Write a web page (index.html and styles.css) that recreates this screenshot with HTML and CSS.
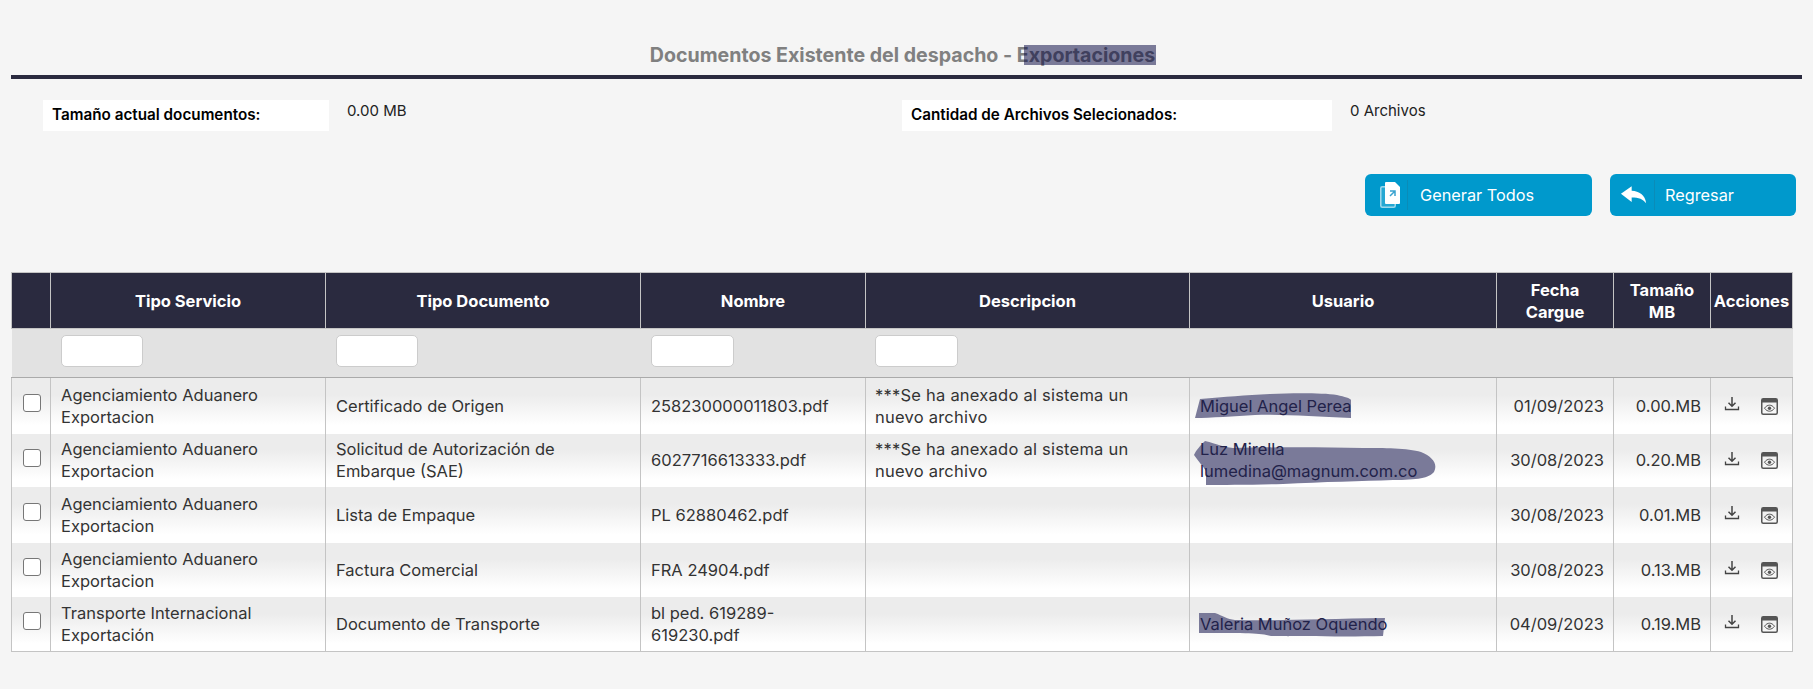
FILE: index.html
```html
<!DOCTYPE html>
<html lang="es">
<head>
<meta charset="utf-8">
<title>Documentos Existente del despacho</title>
<link rel="stylesheet" href="styles.css">
</head>
<body>
<main class="page">
  <h1 class="title">Documentos Existente del despacho - <span class="mark">Exportaciones</span></h1>
  <section class="stats">
    <div class="stat stat-a"><span class="stat-label">Tamaño actual documentos:</span><span class="stat-value">0.00 MB</span></div>
    <div class="stat stat-b"><span class="stat-label">Cantidad de Archivos Selecionados:</span><span class="stat-value">0 Archivos</span></div>
  </section>
  <section class="actions">
    <button class="btn btn-gen" type="button">
      <span class="btn-icon"><svg width="20" height="26" viewBox="0 0 20 26"><rect x=".75" y="4.750" width="14.500" height="20.500" rx="1.500" fill="#fff" fill-opacity=".15" stroke="#fff" stroke-opacity=".6" stroke-width="1.500"/><path d="M5 1a1 1 0 0 1 1-1h9l5 5v16a1 1 0 0 1-1 1H6a1 1 0 0 1-1-1z" fill="#fff"/><path d="M10 9h5v5M14.500 9.500 10 14" fill="none" stroke="#3aa3cf" stroke-width="1.500"/></svg></span>
      <span class="btn-text">Generar Todos</span>
    </button>
    <button class="btn btn-back" type="button">
      <span class="btn-icon"><svg width="28" height="20" viewBox="0 0 30 24" preserveAspectRatio="none"><path d="M1 10.500 12.500 1.500v5.500c8 .5 14.500 5 15.500 15-3-5-8-7-15.500-7v5.500z" fill="#fff"/></svg></span>
      <span class="btn-text">Regresar</span>
    </button>
  </section>
  <table class="grid">
    <colgroup>
      <col class="c-check"><col class="c-serv"><col class="c-tipo"><col class="c-nom"><col class="c-desc"><col class="c-user"><col class="c-fecha"><col class="c-size"><col class="c-act">
    </colgroup>
    <thead>
      <tr class="head">
        <th></th><th>Tipo Servicio</th><th>Tipo Documento</th><th>Nombre</th><th>Descripcion</th><th>Usuario</th><th>Fecha<br>Cargue</th><th>Tamaño<br>MB</th><th>Acciones</th>
      </tr>
      <tr class="filters">
        <td></td>
        <td><input class="filter" type="text" aria-label="Tipo Servicio"></td>
        <td><input class="filter" type="text" aria-label="Tipo Documento"></td>
        <td><input class="filter filter-wide" type="text" aria-label="Nombre"></td>
        <td class="desc-filter"><input class="filter filter-wide" type="text" aria-label="Descripcion"></td>
        <td></td><td></td><td></td><td></td>
      </tr>
    </thead>
    <tbody>
      <tr class="row r1">
        <td class="chk"><input class="box" type="checkbox" aria-label="Seleccionar"></td>
        <td>Agenciamiento Aduanero Exportacion</td>
        <td>Certificado de Origen</td>
        <td>258230000011803.pdf</td>
        <td class="desc">***Se ha anexado al sistema un nuevo archivo</td>
        <td class="user">
          <svg class="scribble s1" width="160" height="28" viewBox="0 0 160 28"><path d="M5 7C30 5 50 3 75 2 100 1 128 1 142 3 150 5 155 6 156 8L156 26C120 25 90 22 60 23 40 24 15 26 0 26z"/></svg>
          <span class="utext">Miguel Angel Perea</span>
        </td>
        <td class="num">01/09/2023</td>
        <td class="num">0.00.MB</td>
        <td class="acts"><svg class="i-dl" width="16" height="16" viewBox="0 0 16 16"><use href="#dl"/></svg><svg class="i-view" width="17" height="17" viewBox="0 0 17 17"><use href="#view"/></svg></td>
      </tr>
      <tr class="row r2">
        <td class="chk"><input class="box" type="checkbox" aria-label="Seleccionar"></td>
        <td>Agenciamiento Aduanero Exportacion</td>
        <td>Solicitud de Autorización de Embarque (SAE)</td>
        <td>6027716613333.pdf</td>
        <td class="desc">***Se ha anexado al sistema un nuevo archivo</td>
        <td class="user">
          <svg class="scribble s2" width="246" height="46" viewBox="0 0 246 46"><path d="M12 1C24 4 30 7 40 8 80 7 130 7 170 8 190 8 215 8 228 12 240 17 245 24 241 32 236 38 225 40 200 40 170 41 130 42 90 44 60 45 30 45 13 45L13 31C10 26 5 21 1 15 3 10 8 5 12 1z"/></svg>
          <span class="utext">Luz Mirella<br>lumedina@magnum.com.co</span>
        </td>
        <td class="num">30/08/2023</td>
        <td class="num">0.20.MB</td>
        <td class="acts"><svg class="i-dl" width="16" height="16" viewBox="0 0 16 16"><use href="#dl"/></svg><svg class="i-view" width="17" height="17" viewBox="0 0 17 17"><use href="#view"/></svg></td>
      </tr>
      <tr class="row r3">
        <td class="chk"><input class="box" type="checkbox" aria-label="Seleccionar"></td>
        <td>Agenciamiento Aduanero Exportacion</td>
        <td>Lista de Empaque</td>
        <td>PL 62880462.pdf</td>
        <td></td><td></td>
        <td class="num">30/08/2023</td>
        <td class="num">0.01.MB</td>
        <td class="acts"><svg class="i-dl" width="16" height="16" viewBox="0 0 16 16"><use href="#dl"/></svg><svg class="i-view" width="17" height="17" viewBox="0 0 17 17"><use href="#view"/></svg></td>
      </tr>
      <tr class="row r4">
        <td class="chk"><input class="box" type="checkbox" aria-label="Seleccionar"></td>
        <td>Agenciamiento Aduanero Exportacion</td>
        <td>Factura Comercial</td>
        <td>FRA 24904.pdf</td>
        <td></td><td></td>
        <td class="num">30/08/2023</td>
        <td class="num">0.13.MB</td>
        <td class="acts"><svg class="i-dl" width="16" height="16" viewBox="0 0 16 16"><use href="#dl"/></svg><svg class="i-view" width="17" height="17" viewBox="0 0 17 17"><use href="#view"/></svg></td>
      </tr>
      <tr class="row r5">
        <td class="chk"><input class="box" type="checkbox" aria-label="Seleccionar"></td>
        <td>Transporte Internacional Exportación</td>
        <td>Documento de Transporte</td>
        <td>bl ped. 619289-619230.pdf</td>
        <td></td>
        <td class="user">
          <svg class="scribble s3" width="190" height="26" viewBox="0 0 190 26"><path d="M0 0H16C24 3 28 6 36 7 70 8 120 6 186 5L184 23C150 24 100 23 72 23 60 20 50 20 0 20z"/></svg>
          <span class="utext">Valeria Muñoz Oquendo</span>
        </td>
        <td class="num">04/09/2023</td>
        <td class="num">0.19.MB</td>
        <td class="acts"><svg class="i-dl" width="16" height="16" viewBox="0 0 16 16"><use href="#dl"/></svg><svg class="i-view" width="17" height="17" viewBox="0 0 17 17"><use href="#view"/></svg></td>
      </tr>
    </tbody>
  </table>
</main>
<svg class="defs" width="0" height="0" aria-hidden="true">
  <defs>
    <g id="dl"><path d="M8 1v9M4.500 6.800 8 10.300l3.500-3.500" fill="none" stroke="#444" stroke-width="1.500"/><path d="M1.500 10.500v3h13v-3" fill="none" stroke="#444" stroke-width="1.300"/></g>
    <g id="view"><rect x=".75" y=".75" width="15.500" height="15.500" rx="1.500" fill="none" stroke="#555" stroke-width="1.500"/><rect x="1" y="1" width="15" height="3.500" fill="#555"/><path d="M3.500 10.200C5 8 6.800 7.200 8.500 7.200s3.500.8 5 3c-1.500 2.200-3.300 3-5 3s-3.500-.8-5-3z" fill="none" stroke="#555" stroke-width="1"/><circle cx="8.500" cy="10.200" r="1.700" fill="#555"/></g>
  </defs>
</svg>
</body>
</html>
```
FILE: styles.css
```css
* { box-sizing: border-box; }
html, body { margin: 0; padding: 0; }
body {
  background: #f5f5f5;
  font-family: Inter, "Noto Sans", sans-serif;
  color: #333;
  min-height: 689px;
  overflow: hidden;
}
.page { padding: 44px 11px 0 11px; }
.title {
  margin: 0;
  height: 35px;
  padding: 0 8px 8px 0;
  border-bottom: 4px solid #2a2a3f;
  text-align: center;
  font-size: 19.600px;
  line-height: 23px;
  font-weight: 700;
  color: #808080;
}
.mark { position: relative; display: inline-block; }
.mark::after {
  content: "";
  position: absolute;
  left: 7px;
  right: -1px;
  top: 1px;
  height: 20px;
  background: rgba(0, 0, 60, .5);
}
.stats { display: flex; padding: 21px 0 0 32px; height: 73px; }
.stat { display: flex; align-items: flex-start; }
.stat-a { width: 859px; }
.stat-label {
  display: block;
  height: 31px;
  background: #fff;
  font-size: 15.250px;
  font-weight: 600;
  line-height: 29px;
  color: #000;
  padding-left: 9px;
}
.stat-a .stat-label { width: 286px; margin-right: 18px; }
.stat-b .stat-label { width: 430px; margin-right: 18px; }
.stat-value { font-size: 15px; line-height: 22px; color: #222; }
.actions { display: flex; justify-content: flex-end; gap: 18px; padding-right: 6px; height: 120px; padding-top: 22px; }
.btn {
  display: flex;
  align-items: center;
  height: 42px;
  border: 0;
  border-radius: 6px;
  background: #0099cc;
  color: #fff;
  font-family: inherit;
  font-size: 16.300px;
  padding: 0;
}
.btn-gen { width: 227px; }
.btn-back { width: 186px; }
.btn-icon {
  display: flex;
  align-items: center;
  justify-content: center;
  width: 43px;
  height: 30px;
  border-right: 1px solid #0a8cb8;
  margin-right: 12px;
  padding-left: 7px;
}
.btn-back .btn-icon { width: 45px; margin-right: 10px; padding-left: 4px; }
.grid {
  table-layout: fixed;
  border-collapse: collapse;
  width: 1781px;
  font-size: 16.500px;
  line-height: 22px;
}
.c-check { width: 39px; }
.c-serv { width: 275px; }
.c-tipo { width: 315px; }
.c-nom { width: 225px; }
.c-desc { width: 324px; }
.c-user { width: 307px; }
.c-fecha { width: 117px; }
.c-size { width: 97px; }
.c-act { width: 82px; }
.grid th, .grid td { border: 1px solid #c4c4c4; }
.head { height: 56px; background: #2a2a3f; }
.head th {
  color: #fff;
  font-size: 16.500px;
  font-weight: 700;
  line-height: 22px;
  text-align: center;
  padding: 0 2px;
}
.filters { height: 49px; background: #e2e2e2; }
.filters td { padding: 0 0 5px 10px; border-left-color: transparent; border-right-color: transparent; border-bottom-color: #aaa; }
.filters td.desc-filter { padding-left: 9px; }
.filter {
  display: block;
  width: 82px;
  height: 32px;
  background: #fff;
  border: 1px solid #ccc;
  border-radius: 5px;
}
.filter-wide { width: 83px; }
.row { background: linear-gradient(#ececec 30%, #fff 85%); }
.row td { padding: 0 10px; vertical-align: middle; color: #333; overflow-wrap: anywhere; border-top: 0; border-bottom: 0; }
.r5 td { border-bottom: 1px solid #c4c4c4; }
.r1 { height: 56px; }
.r2 { height: 53px; }
.r3 { height: 56px; }
.r4 { height: 54px; }
.r5 { height: 55px; }
.row td.chk { padding: 0 0 5px 11px; }
.row td.desc { padding: 0 40px 0 9px; letter-spacing: .23px; }
.box {
  appearance: none;
  display: block;
  width: 18px;
  height: 18px;
  margin: 0;
  background: #fff;
  border: 1.500px solid #777;
  border-radius: 3px;
}
.row td.num { text-align: right; padding-right: 9px; }
.row td.user { position: relative; color: #22224a; }
.utext { position: relative; }
.scribble { position: absolute; fill: #7a7a99; }
.s1 { left: 5px; top: 14px; }
.s2 { left: 3px; top: 6px; }
.s3 { left: 9px; top: 16px; }
.row td.acts { padding: 0 0 2px 13px; white-space: nowrap; }
.i-dl { vertical-align: middle; margin-right: 21px; position: relative; top: -2px; }
.i-view { vertical-align: middle; }
.defs { position: absolute; }
```
